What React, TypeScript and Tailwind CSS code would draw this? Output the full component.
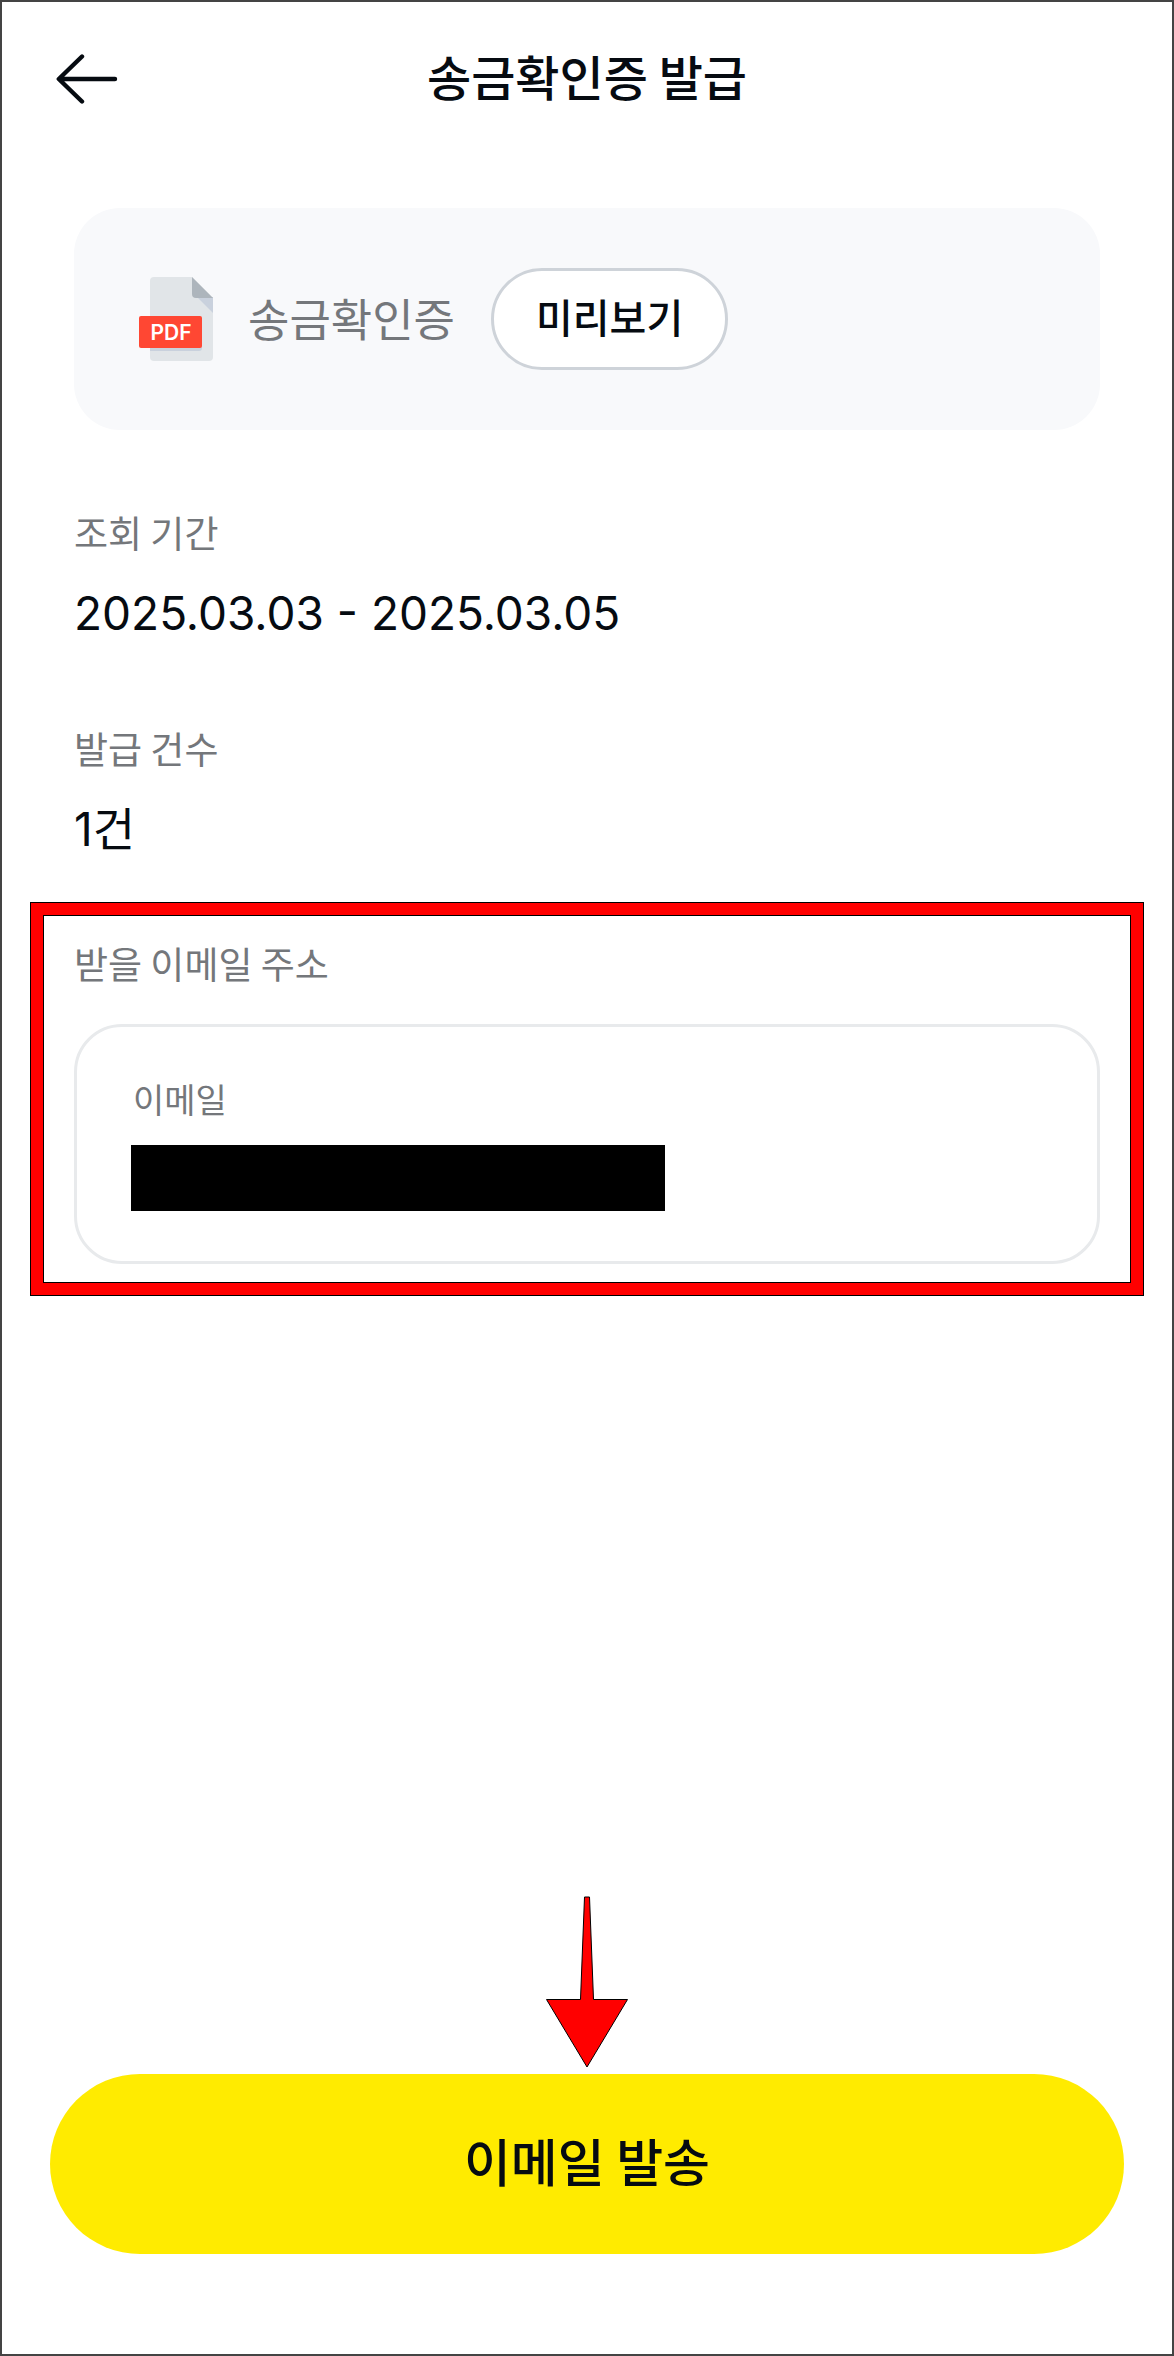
import React, { useState } from 'react'

interface InfoItem {
	label: string
	value: string
}

const infoItems: InfoItem[] = [
	{ label: '조회 기간', value: '2025.03.03 - 2025.03.05' },
	{ label: '발급 건수', value: '1건' },
]

const BackIcon: React.FC = () => (
	<svg
		width="62"
		height="52"
		viewBox="0 0 62 52"
		fill="none"
		stroke="currentColor"
		strokeWidth="4.4"
		strokeLinecap="round"
		strokeLinejoin="round"
		aria-hidden="true"
	>
		<path d="M26 3.5 2.8 26 26 48.5M3 26h56" />
	</svg>
)

const PdfIcon: React.FC = () => (
	<svg width="76" height="86" viewBox="0 0 76 86" aria-hidden="true">
		<path d="M16 1h38l21 21v59a4 4 0 0 1-4 4H16a4 4 0 0 1-4-4V5a4 4 0 0 1 4-4z" fill="#e1e5e8" />
		<path d="M59 21h16v16z" fill="#c9d1dd" />
		<path d="M12 70h52v2a3 3 0 0 1-3 3H12z" fill="#c9d1dd" />
		<path d="M54 1l21 21H58a4 4 0 0 1-4-4z" fill="#adb5bc" />
		<rect x="1" y="40" width="63" height="32" rx="2" fill="#ff4733" />
		<text
			x="33"
			y="64"
			textAnchor="middle"
			fill="#fff"
			className="font-['Inter',sans-serif] text-[21px] font-semibold"
		>
			PDF
		</text>
	</svg>
)

const DownArrow: React.FC = () => (
	<svg width="84" height="174" viewBox="0 0 84 174" aria-hidden="true">
		<path
			d="M39.5 2h5l4 102.500H82.500L42 172 1.500 104.500H35.500z"
			fill="#f00"
			stroke="#000"
			strokeWidth="1"
		/>
	</svg>
)

/** 송금확인증 발급 화면 */
const App: React.FC = () => {
	const [email, setEmail] = useState('')

	return (
		<div className="flex min-h-screen flex-col border-2 border-[#444] bg-white font-['Noto_Sans_CJK_KR',sans-serif] text-[#060b11]">
			<header className="grid grid-cols-[1fr_auto_1fr] items-center px-[54px] pt-[39px]">
				<button type="button" aria-label="뒤로" className="justify-self-start py-3">
					<BackIcon />
				</button>
				<h1 className="pb-2 text-[48px] leading-[68px] font-medium">송금확인증 발급</h1>
			</header>

			<main className="flex flex-1 flex-col pt-[91px]">
				<section className="mx-[72px] flex items-center rounded-[46px] bg-[#f8f9fb] px-16 py-[60px]">
					<PdfIcon />
					<span className="ml-[34px] pb-[2px] text-[45px] leading-[66px] text-[#74777b]">송금확인증</span>
					<button
						type="button"
						className="ml-9 h-[102px] rounded-full border-[3px] border-[#ced3d9] bg-white px-[42px] pb-[6px] text-[40px] leading-[60px] font-medium"
					>
						미리보기
					</button>
				</section>

				<dl className="mx-[72px] mt-[75px] flex flex-col gap-[68px]">
					{infoItems.map((item) => (
						<div key={item.label} className="flex flex-col gap-[14px]">
							<dt className="text-[37px] leading-[54px] text-[#74777b]">{item.label}</dt>
							<dd className="font-['Inter','Noto_Sans_CJK_KR',sans-serif] text-[46px] leading-[80px]">
								{item.value}
							</dd>
						</div>
					))}
				</dl>

				<section className="mx-7 mt-[33px] border border-black bg-[#f00] p-3">
					<div className="border border-black bg-white px-[30px] pt-5 pb-[18px]">
						<h2 className="text-[37px] leading-[54px] text-[#74777b]">받을 이메일 주소</h2>
						<div className="mt-[34px] rounded-[48px] border-[3px] border-[#e8eaec] px-[54px] pt-[47px] pb-[50px]">
							<label htmlFor="email" className="block pl-[2px] text-[34px] leading-[50px] text-[#74777b]">
								이메일
							</label>
							<input
								id="email"
								type="email"
								value={email}
								onChange={(e) => setEmail(e.target.value)}
								className="mt-[21px] block h-[66px] w-[534px] max-w-full bg-black px-2 text-[40px] text-black outline-none"
							/>
						</div>
					</div>
				</section>
			</main>

			<footer className="flex flex-col items-center gap-[5px] px-12 pb-[100px]">
				<DownArrow />
				<button
					type="submit"
					className="h-[180px] w-full rounded-full bg-[#ffeb00] pb-2 text-[51px] leading-[76px] font-medium"
				>
					이메일 발송
				</button>
			</footer>
		</div>
	)
}

export default App
